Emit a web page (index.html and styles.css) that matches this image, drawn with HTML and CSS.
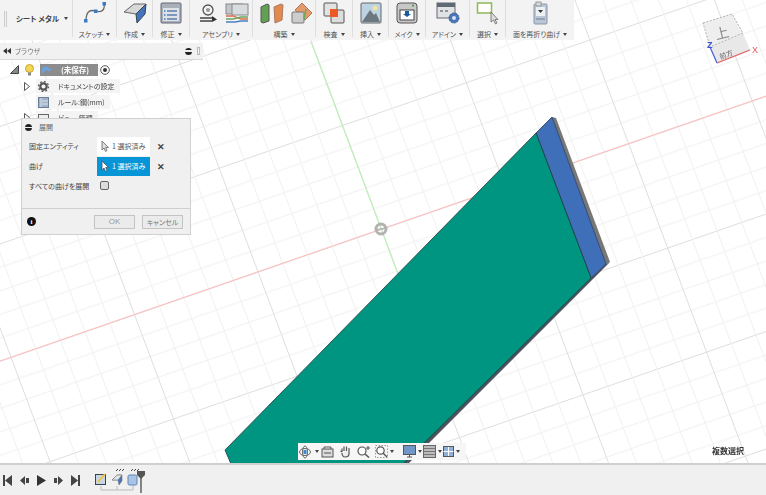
FILE: index.html
```html
<!DOCTYPE html>
<html lang="ja">
<head>
<meta charset="utf-8">
<title>シート メタル</title>
<link rel="stylesheet" href="styles.css">
</head>
<body>
<div class="app">
  <svg class="scene" width="766" height="495" viewBox="0 0 766 495">
    <defs>
      <pattern id="gridA" patternUnits="userSpaceOnUse" x="0" y="361" width="200" height="117.5" patternTransform="skewY(-19.08)">
        <path d="M0 .5H200" stroke="#dedede"/>
        <path d="M0 24H200M0 47.5H200M0 71H200M0 94.5H200" stroke="#f0f0f0"/>
      </pattern>
      <pattern id="gridB" patternUnits="userSpaceOnUse" x="295.4" y="0" width="139.5" height="200" patternTransform="skewX(20.5)">
        <path d="M.5 0V200" stroke="#dedede"/>
        <path d="M28.4 0V200M56.3 0V200M84.2 0V200M112.1 0V200" stroke="#f0f0f0"/>
      </pattern>
    </defs>
    <rect width="766" height="495" fill="url(#gridA)"/>
    <rect width="766" height="495" fill="url(#gridB)"/>
    <path d="M0 361L766 96" stroke="#ffbcbc" fill="none"/>
    <path d="M311 42L420 333" stroke="#b2f5aa" fill="none"/>
    <circle cx="381" cy="229" r="5" fill="none" stroke="#b2b2b2" stroke-width="3"/>
    <path d="M376 230L386 228" stroke="#b2b2b2" stroke-width="1.500"/>
    <polygon points="552,117 556,118 610,262 606,264" fill="#777"/>
    <polygon points="606,264 610,262 408,464 396,464 591,278" fill="#4d545e"/>
    <polygon points="536,133 552,117 606,264 591,278" fill="#3f6fb8" stroke="#24375c" stroke-width=".8"/>
    <polygon points="536,133 591,278 403,464 231,464 225,450" fill="#009580" stroke="#1d3b3e" stroke-width=".8"/>
  </svg>

  <header class="toolbar">
    <div class="tgroup tgroup-workspace">
      <span class="grip"></span>
      <span class="workspace-label">シート メタル<i class="caret"></i></span>
    </div>
    <div class="tgroup w44">
      <svg class="ticon" width="24" height="24" viewBox="0 0 24 24"><path d="M3 20C3 8 9 9 13 10C20 12 22 8 21 2" fill="none" stroke="#666" stroke-width="1.300"/><rect x="1" y="18" width="3.500" height="3.500" fill="#3a78c8"/><rect x="11" y="8.500" width="3.500" height="3.500" fill="#3a78c8"/><rect x="19.500" y="1" width="3.500" height="3.500" fill="#3a78c8"/></svg>
      <span class="tlabel">スケッチ<i class="caret"></i></span>
    </div>
    <div class="tgroup w36">
      <svg class="ticon" width="24" height="24" viewBox="0 0 24 24"><polygon points="1,11 11,3 23,3 13,13" fill="#d8d8d8" stroke="#666"/><polygon points="13,13 23,3 22,13 14,22" fill="#4373b8" stroke="#345"/></svg>
      <span class="tlabel">作成<i class="caret"></i></span>
    </div>
    <div class="tgroup w37">
      <svg class="ticon" width="24" height="24" viewBox="0 0 24 24"><rect x="2" y="2" width="20" height="20" rx="1" fill="#a9b0b8" stroke="#667"/><rect x="4" y="7" width="16" height="13" fill="#dfe3e8"/><path d="M8 10H18M8 14H18M8 18H18" stroke="#5b7fae" stroke-width="1.300"/><path d="M5 10H6.500M5 14H6.500M5 18H6.500" stroke="#3a78c8" stroke-width="1.500"/></svg>
      <span class="tlabel">修正<i class="caret"></i></span>
    </div>
    <div class="tgroup w63">
      <span class="ticons">
        <svg width="20" height="20" viewBox="0 0 20 20"><circle cx="10" cy="7" r="5" fill="none" stroke="#555" stroke-width="1.300"/><circle cx="10" cy="7" r="2" fill="#999"/><path d="M2 15H14M2 18H14" stroke="#444" stroke-width="1.500"/><path d="M14 13L19 16.500L14 19Z" fill="#333"/></svg>
        <svg width="24" height="20" viewBox="0 0 24 20"><rect x="1" y="1" width="16" height="10" fill="#c2c6ca" stroke="#888"/><rect x="7" y="1" width="16" height="11" fill="#d9dcdf" stroke="#888"/><path d="M1 13H8L16 16H23" stroke="#dd6a4e" fill="none" stroke-width="1.300"/><path d="M1 16H8L16 14H23" stroke="#6aa75a" fill="none" stroke-width="1.300"/><path d="M1 19H10L16 18H23" stroke="#4d7fc4" fill="none" stroke-width="1.300"/></svg>
      </span>
      <span class="tlabel">アセンブリ<i class="caret"></i></span>
    </div>
    <div class="tgroup w63">
      <span class="ticons">
        <svg width="24" height="22" viewBox="0 0 24 22"><polygon points="1,5 7,2 9,3 9,19 3,21 1,20" fill="#62a054" stroke="#555"/><polygon points="14,5 21,2 23,3 22,18 15,21" fill="#e2894b" stroke="#a76"/></svg>
        <svg width="22" height="22" viewBox="0 0 22 22"><polygon points="11,1 21,11 14,18 4,8" fill="#e59a6a" stroke="#a76"/><rect x="1" y="10" width="12" height="11" rx="1" fill="#ccc" stroke="#777"/><path d="M15 7L13 17" stroke="#6aa75a" stroke-width="1.500"/></svg>
      </span>
      <span class="tlabel">構築<i class="caret"></i></span>
    </div>
    <div class="tgroup w37">
      <svg class="ticon" width="24" height="24" viewBox="0 0 24 24"><rect x="2" y="2" width="13" height="13" rx="1" fill="#e2e2e2" stroke="#555"/><rect x="9" y="9" width="13" height="13" rx="1" fill="#dcdcdc" stroke="#555"/><rect x="8" y="8" width="8" height="8" fill="#ea5a24"/></svg>
      <span class="tlabel">検査<i class="caret"></i></span>
    </div>
    <div class="tgroup w36">
      <svg class="ticon" width="24" height="24" viewBox="0 0 24 24"><rect x="2" y="2" width="20" height="20" rx="1" fill="#bcd3e2" stroke="#666"/><circle cx="16" cy="7" r="2.500" fill="#f2e3a2"/><polygon points="3,21 11,9 15,14 17,12 21,21" fill="#6d7780"/></svg>
      <span class="tlabel">挿入<i class="caret"></i></span>
    </div>
    <div class="tgroup w37">
      <svg class="ticon" width="24" height="24" viewBox="0 0 24 24"><rect x="2" y="2" width="20" height="20" rx="3" fill="#c8c8c8" stroke="#555"/><rect x="5" y="9" width="14" height="10" fill="#fff" stroke="#444"/><path d="M10 10H14V13H16L12 16L8 13H10Z" fill="#1a5a9c"/><rect x="17" y="3.500" width="2" height="2" fill="#4aa642"/></svg>
      <span class="tlabel">メイク<i class="caret"></i></span>
    </div>
    <div class="tgroup w44">
      <svg class="ticon" width="24" height="24" viewBox="0 0 24 24"><rect x="1" y="2" width="18" height="15" fill="#dfe3e6" stroke="#667"/><rect x="1" y="2" width="18" height="4" fill="#5f6a74"/><path d="M4 10H7M9 10H12" stroke="#444"/><circle cx="18" cy="17" r="5" fill="#4c76b8" stroke="#2f5a9c" stroke-dasharray="2 1"/><circle cx="18" cy="17" r="2" fill="#d5e2f3"/></svg>
      <span class="tlabel">アドイン<i class="caret"></i></span>
    </div>
    <div class="tgroup w36">
      <svg class="ticon" width="24" height="24" viewBox="0 0 24 24"><rect x="1.500" y="2" width="14" height="10" fill="#fff" stroke="#8fb956" stroke-width="1.500"/><path d="M15 11V21L17.500 19L19.500 23L21 22L19 18.500H22Z" fill="#ddd" stroke="#666" stroke-width=".8"/></svg>
      <span class="tlabel">選択<i class="caret"></i></span>
    </div>
    <div class="tgroup w68">
      <svg class="ticon" width="18" height="24" viewBox="0 0 18 24"><rect x="3" y="3" width="13" height="20" rx="1" fill="#b9c6d6" stroke="#8a97a8"/><rect x="5" y="1" width="5" height="4" fill="#d5dbe2" stroke="#999"/><rect x="5" y="6" width="9" height="9" fill="#eef1f4"/><path d="M7 9H12L9.500 12Z" fill="#333"/><path d="M5 18H14" stroke="#6f7f94"/></svg>
      <span class="tlabel">面を再折り曲げ<i class="caret"></i></span>
    </div>
  </header>

  <section class="browser">
    <div class="browser-bar">
      <span class="rewind"><svg width="8" height="6" viewBox="0 0 8 6"><path d="M4 0V6L0 3ZM8 0V6L4 3Z" fill="#333"/></svg></span>
      <span class="browser-title">ブラウザ</span>
      <span class="minus"></span>
      <span class="bar-grip"></span>
    </div>
    <div class="tree">
      <div class="tree-row row-root">
        <svg width="9" height="9" viewBox="0 0 9 9"><path d="M8.500 .5V8.500H.5Z" fill="#888" stroke="#444"/></svg>
        <svg class="bulb" width="9" height="12" viewBox="0 0 9 12"><circle cx="4.500" cy="4.500" r="4" fill="#f3d655" stroke="#c9a52c"/><rect x="3" y="8.500" width="3" height="3" fill="#888"/></svg>
        <span class="doc-chip">
          <svg width="12" height="10" viewBox="0 0 12 10"><path d="M1 9V3L5 1L11 5L8 6.500L5 5Z" fill="#6ea0dc"/></svg>
          <span class="doc-name">(未保存)</span>
        </span>
        <svg class="radio" width="10" height="10" viewBox="0 0 10 10"><circle cx="5" cy="5" r="4.300" fill="#fff" stroke="#555"/><circle cx="5" cy="5" r="2" fill="#333"/></svg>
      </div>
      <div class="tree-row row-settings">
        <svg width="6" height="9" viewBox="0 0 6 9"><path d="M.5.5L5.500 4.500L.5 8.500Z" fill="#fff" stroke="#555"/></svg>
        <span class="tree-chip">
          <svg width="11" height="11" viewBox="0 0 11 11"><circle cx="5.500" cy="5.500" r="3.200" fill="none" stroke="#555" stroke-width="2.200"/><circle cx="5.500" cy="5.500" r="5" fill="none" stroke="#555" stroke-width="1.300" stroke-dasharray="1.800 2.100"/></svg>
          <span class="tree-text">ドキュメントの設定</span>
        </span>
      </div>
      <div class="tree-row row-rule">
        <span class="tree-chip">
          <svg width="11" height="11" viewBox="0 0 11 11"><rect x=".5" y=".5" width="10" height="10" fill="#9fb2c8" stroke="#6d7f94"/><path d="M3 1V10M4 4H10M4 7H10" stroke="#dbe3ec"/></svg>
          <span class="tree-text">ルール:鋼(mm)</span>
        </span>
      </div>
      <div class="tree-row row-view">
        <svg width="6" height="9" viewBox="0 0 6 9"><path d="M.5.5L5.500 4.500L.5 8.500Z" fill="#fff" stroke="#555"/></svg>
        <span class="tree-chip">
          <svg width="11" height="10" viewBox="0 0 11 10"><rect x=".5" y="1.500" width="10" height="8" fill="#eee" stroke="#666"/></svg>
          <span class="tree-text">ビュー 管理</span>
        </span>
      </div>
    </div>
  </section>

  <section class="dialog">
    <div class="dialog-head"><span class="minus"></span><span class="dialog-title">展開</span></div>
    <div class="dialog-body">
      <div class="field">
        <span class="field-label">固定エンティティ</span>
        <span class="select-btn">
          <svg width="8" height="12" viewBox="0 0 8 12"><path d="M1 1V10L3 8L4.500 11.500L6 10.500L4.700 7.500H7.500Z" fill="#ddd" stroke="#666" stroke-width=".8"/></svg>1 選択済み
        </span>
        <span class="clear">✕</span>
      </div>
      <div class="field">
        <span class="field-label">曲げ</span>
        <span class="select-btn is-active">
          <svg width="8" height="12" viewBox="0 0 8 12"><path d="M1 1V10L3 8L4.500 11.500L6 10.500L4.700 7.500H7.500Z" fill="#fff" stroke="#456" stroke-width=".8"/></svg>1 選択済み
        </span>
        <span class="clear">✕</span>
      </div>
      <div class="field field-check">
        <span class="field-label">すべての曲げを展開</span>
        <span class="checkbox"></span>
      </div>
    </div>
    <div class="dialog-foot">
      <span class="info">i</span>
      <span class="btn btn-ok">OK</span>
      <span class="btn">キャンセル</span>
    </div>
  </section>

  <svg class="viewcube" width="60" height="64" viewBox="0 0 60 64">
    <polygon points="8,35 41,21 48,38 15,51" fill="#e8e8e8"/>
    <polygon points="1,11 30,2 41,21 8,35" fill="#eeeeee" stroke="#b0b0b0" stroke-dasharray="2 1.500"/>
    <path d="M8 35L15 51" stroke="#4a63d8" stroke-width="1.300"/>
    <path d="M15 51L48 38" stroke="#e25a5a" stroke-width="1.300"/>
    <text class="cube-top" x="21" y="26" transform="rotate(-14 21 26)">上</text>
    <text class="cube-front" x="25" y="45" transform="rotate(-20 25 45)">前方</text>
    <text class="cube-z" x="5" y="36">Z</text>
    <text class="cube-x" x="50" y="41">X</text>
  </svg>

  <nav class="navbar">
    <svg width="12" height="14" viewBox="0 0 12 14"><ellipse cx="6" cy="7" rx="5.500" ry="3.500" fill="none" stroke="#666"/><ellipse cx="6" cy="7" rx="2.500" ry="6" fill="none" stroke="#666"/><rect x="4.500" y="5" width="3" height="4" fill="#3a88d0"/></svg><i class="caret nav-caret-wide"></i>
    <svg class="nav-first" width="13" height="12" viewBox="0 0 13 12"><rect x="1" y="3" width="11" height="8" fill="#ddd" stroke="#555"/><path d="M3 3V1H10V3M3 7H10" stroke="#555" fill="none"/></svg>
    <svg class="nav-gap" width="13" height="13" viewBox="0 0 13 13"><path d="M3 7V3.500M5 6V1.500M7.500 6V1.500M10 7V3M3 7L1.500 6M10 6V9C10 11 8 12 6 12C4 12 3 10 3 8" fill="#eee" stroke="#555" stroke-width="1.200"/></svg>
    <svg class="nav-gap" width="13" height="13" viewBox="0 0 13 13"><circle cx="5" cy="6" r="4" fill="#fff" stroke="#555" stroke-width="1.200"/><path d="M8 9L12 12.500" stroke="#555" stroke-width="1.500"/><path d="M11 1V5M9 3H13" stroke="#555"/></svg>
    <svg class="nav-gap" width="13" height="13" viewBox="0 0 13 13"><rect x=".5" y=".5" width="12" height="12" fill="none" stroke="#999" stroke-dasharray="1.500 1.500"/><circle cx="5.500" cy="5.500" r="3.700" fill="#fff" stroke="#555" stroke-width="1.200"/><path d="M8 8L12 12" stroke="#555" stroke-width="1.500"/></svg><i class="caret nav-caret"></i>
    <svg class="nav-sep" width="13" height="13" viewBox="0 0 13 13"><rect x=".5" y=".5" width="12" height="9" fill="#6f98c8" stroke="#555"/><path d="M4 12H9M6.500 10V12" stroke="#555"/></svg><i class="caret nav-caret"></i>
    <svg class="nav-tight" width="13" height="13" viewBox="0 0 13 13"><rect x=".5" y=".5" width="12" height="12" fill="#bbb" stroke="#666"/><path d="M1 3.500H12M1 6.500H12M1 9.500H12" stroke="#777"/></svg><i class="caret nav-caret"></i>
    <svg class="nav-tight" width="11" height="11" viewBox="0 0 11 11"><rect x=".5" y=".5" width="10" height="10" fill="#8fb0d8" stroke="#555"/><path d="M5.500 1V10M.5 5.500H10.500" stroke="#fff"/></svg><i class="caret nav-caret"></i>
  </nav>

  <span class="multi-select">複数選択</span>

  <footer class="timeline">
    <span class="tl-controls">
      <svg width="9" height="11" viewBox="0 0 9 11"><path d="M0 0H2V11H0ZM9 0V11L2 5.500Z" fill="#444"/></svg>
      <svg width="9" height="9" viewBox="0 0 9 9"><path d="M5 0V9L0 4.500ZM6 2H9V7H6Z" fill="#444"/></svg>
      <svg width="9" height="11" viewBox="0 0 9 11"><path d="M0 0L9 5.500L0 11Z" fill="#333"/></svg>
      <svg width="9" height="9" viewBox="0 0 9 9"><path d="M4 0V9L9 4.500ZM0 2H3V7H0Z" fill="#444"/></svg>
      <svg width="9" height="11" viewBox="0 0 9 11"><path d="M0 0V11L7 5.500ZM7 0H9V11H7Z" fill="#444"/></svg>
    </span>
    <span class="tl-features">
      <svg width="52" height="24" viewBox="0 0 52 24">
        <path d="M6 18V22H38V18M22 18V22" stroke="#bbb" fill="none"/>
        <path d="M21 3L23 1M24 3L26 1M27 3L29 1M36 3L38 1M39 3L41 1M42 3L44 1" stroke="#444"/>
        <rect x=".5" y="6.500" width="10" height="10" fill="#c7d4e2" stroke="#345"/>
        <path d="M3 14L10 6" stroke="#eec53a" stroke-width="1.800"/>
        <polygon points="17,12 22,7 27,7 27,13 24,17 23,12" fill="#3e76c4" stroke="#777" stroke-width=".6"/>
        <polygon points="17,12 22,7 27,7 23,12" fill="#e4e4e4" stroke="#777" stroke-width=".6"/>
        <rect x="33" y="7" width="9" height="10" rx="1.500" fill="#a9c4e4" stroke="#5d83b6"/>
      </svg>
      <svg class="marker" width="10" height="22" viewBox="0 0 10 22"><path d="M1 0H9V4L5 8L1 4Z" fill="#555"/><path d="M5 6V22" stroke="#555" stroke-width="1.400"/></svg>
    </span>
  </footer>
</div>
</body>
</html>
```

FILE: styles.css
```css
* { box-sizing: border-box; }
html, body { margin: 0; padding: 0; background: #fff; }
body { font-family: "Noto Sans CJK JP", "Liberation Sans", sans-serif; font-feature-settings: "palt"; color: #444; overflow: hidden; }
svg { display: block; flex: none; }
i { font-style: normal; }

.app { position: relative; width: 766px; height: 495px; overflow: hidden; display: flex; flex-direction: column; filter: blur(.35px); }
.scene { position: absolute; left: 0; top: 0; }

/* toolbar */
.toolbar { position: relative; display: flex; width: 574px; height: 40px; background: #f3f3f3; flex: none; }
.tgroup { display: flex; flex-direction: column; align-items: center; justify-content: flex-start; padding-top: 1px; border-right: 1px solid #dedede; height: 37px; flex: none; }
.tgroup:last-child { border-right: 0; }
.tgroup-workspace { width: 73px; flex-direction: row; padding: 0 0 0 4px; align-items: center; height: 37px; }
.w36 { width: 36px; } .w37 { width: 37px; } .w44 { width: 44px; } .w63 { width: 63px; } .w68 { width: 68px; }
.ticon { height: 24px; }
.ticons { display: flex; gap: 7px; height: 24px; align-items: center; flex: none; margin-left: 4px; }
.tlabel { display: flex; align-items: center; gap: 3px; font-size: 7px; line-height: 10px; margin-top: 4px; white-space: nowrap; color: #555; flex: none; }
.grip { width: 3px; height: 16px; border: 1px solid #ccc; border-width: 0 1px; margin-right: 9px; }
.workspace-label { display: flex; align-items: center; gap: 5px; font-size: 7.500px; font-weight: 700; color: #444; white-space: nowrap; }
.caret { display: inline-block; width: 0; height: 0; border: 2.500px solid transparent; border-top: 3px solid #444; border-bottom: 0; flex: none; }

/* browser */
.browser { position: absolute; left: 0; top: 43px; width: 203px; }
.browser-bar { display: flex; align-items: center; height: 17px; padding: 0 2px; background: #f1f1f1; border-bottom: 1px solid #d8d8d8; }
.rewind { width: 13px; padding-left: 1px; }
.browser-title { flex: 1; font-size: 7px; color: #777; }
.minus { display: block; width: 7px; height: 7px; border-radius: 50%; background: linear-gradient(#222 0 2.500px, #eee 2.500px 4px, #222 4px); flex: none; }
.bar-grip { width: 3px; height: 8px; margin: 0 1px 0 5px; border: 1px solid #bbb; }
.tree { padding-top: 2px; display: flex; flex-direction: column; }
.tree-row { display: flex; align-items: center; font-size: 7px; color: #444; white-space: nowrap; }
.row-root { height: 15px; padding-left: 10px; gap: 3px; }
.bulb { margin: 0 3px 0 3px; }
.doc-chip { display: flex; align-items: center; width: 58px; height: 12px; padding-left: 1px; gap: 8px; background: #8c8c8c; }
.doc-name { color: #fff; font-weight: 700; font-size: 7.500px; }
.radio { margin-left: -1px; }
.row-settings { height: 16px; padding-left: 24px; margin-top: 1px; gap: 6px; }
.row-rule { height: 16px; padding-left: 36px; }
.row-view { height: 15px; padding-left: 24px; gap: 6px; }
.tree-chip { display: flex; align-items: center; height: 14px; padding: 0 5px 0 2px; gap: 9px; background: #f4f4f4; }

/* dialog */
.dialog { position: absolute; left: 21px; top: 118px; width: 170px; height: 117px; display: flex; flex-direction: column; background: #f0f0f0; border: 1px solid #d0d0d0; }
.dialog-head { display: flex; align-items: center; gap: 7px; height: 16px; padding-left: 3px; font-size: 7px; color: #666; flex: none; }
.dialog-body { flex: 1; padding-top: 1px; border-bottom: 1px solid #cfcfcf; }
.field { display: flex; align-items: center; height: 20px; padding-left: 7px; font-size: 7px; color: #444; }
.field-label { width: 68px; white-space: nowrap; }
.select-btn { display: flex; align-items: center; gap: 3px; width: 53px; height: 19px; padding-left: 4px; font-size: 7px; background: #fff; color: #555; white-space: nowrap; }
.select-btn.is-active { background: #0696d7; color: #fff; }
.clear { margin-left: 7px; font-size: 9px; line-height: 1; font-weight: 700; color: #444; }
.field-check { height: 19px; }
.field-check .field-label { width: 71px; }
.checkbox { width: 9px; height: 9px; border: 1px solid #666; border-radius: 2px; background: #dcdcdc; }
.dialog-foot { display: flex; align-items: center; height: 25px; padding: 0 0 0 5px; gap: 7px; flex: none; }
.info { display: flex; align-items: center; justify-content: center; width: 9px; height: 9px; margin-right: 51px; border-radius: 50%; background: #111; color: #fff; font-size: 7px; font-weight: 700; font-family: "Liberation Serif", serif; flex: none; }
.btn { display: flex; align-items: center; justify-content: center; width: 41px; height: 14px; font-size: 7px; border: 1px solid #c4c4c4; background: #ebebeb; color: #777; white-space: nowrap; flex: none; }
.btn-ok { font-family: "Liberation Sans", sans-serif; font-size: 8px; color: #999; }

/* view cube */
.viewcube { position: absolute; left: 702px; top: 12px; }
.cube-top { font-size: 14px; fill: #888; text-anchor: middle; }
.cube-front { font-size: 7px; fill: #666; text-anchor: middle; }
.cube-z { font: 700 9px "Liberation Sans", sans-serif; fill: #3a55d8; }
.cube-x { font: 400 9px "Liberation Sans", sans-serif; fill: #e25a5a; }

/* navigation bar */
.navbar { position: absolute; left: 298px; top: 443px; width: 168px; height: 17px; display: flex; align-items: center; padding-left: 1px; background: #f6f6f6; }
.nav-caret { margin-left: 2px; }
.nav-caret-wide { margin-left: 4px; }
.nav-first { margin-left: 2px; }
.nav-gap { margin-left: 5px; }
.nav-sep { margin-left: 9px; }
.nav-tight { margin-left: 1px; }

.multi-select { position: absolute; left: 712px; top: 445px; font-size: 8px; font-weight: 700; line-height: 12px; color: #333; }

/* timeline */
.timeline { position: absolute; left: 0; top: 463px; width: 766px; height: 32px; display: flex; align-items: center; background: #f0f0f0; border-top: 2px solid #cfcfcf; }
.tl-controls { display: flex; align-items: center; gap: 8px; margin-left: 3px; }
.tl-features { display: flex; margin-left: 15px; margin-top: 1px; }
.marker { margin-left: -11px; margin-top: 3px; }
```
